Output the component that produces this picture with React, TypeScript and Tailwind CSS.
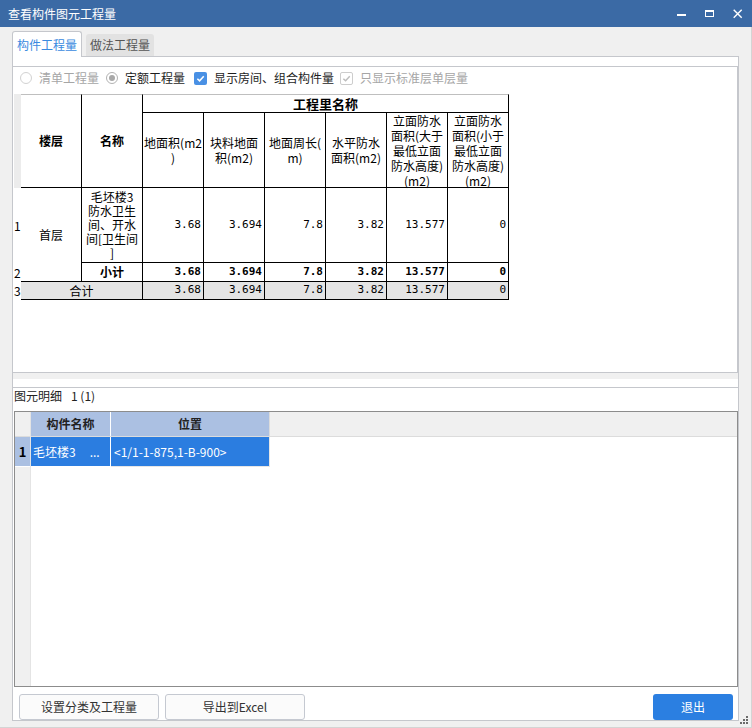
import React from "react";

const sans = "font-['Noto_Sans_CJK_SC','Noto_Sans',sans-serif]";
const mono = "font-['DejaVu_Sans_Mono','Liberation_Mono',monospace]";

function Radio({ checked }: { checked?: boolean }) {
  return (
    <span
      className={`flex h-[12px] w-[12px] items-center justify-center rounded-full border bg-white ${
        checked ? "border-[#b2b2b2]" : "border-[#d2d2d2]"
      }`}
    >
      {checked && <span className="h-[6px] w-[6px] rounded-full bg-[#a8a8a8]" />}
    </span>
  );
}

function Check({ disabled }: { disabled?: boolean }) {
  return disabled ? (
    <span className="flex h-[13px] w-[13px] items-center justify-center rounded-[2px] border border-[#cdcdcd] bg-white">
      <svg viewBox="0 0 10 10" className="h-[9px] w-[9px]">
        <path d="M1.5 5.2 4 7.6 8.6 2.6" fill="none" stroke="#bcbcbc" strokeWidth="1.6" />
      </svg>
    </span>
  ) : (
    <span className="flex h-[13px] w-[13px] items-center justify-center rounded-[2px] bg-[#4990e4]">
      <svg viewBox="0 0 10 10" className="h-[9px] w-[9px]">
        <path d="M1.5 5.2 4 7.6 8.6 2.6" fill="none" stroke="#ffffff" strokeWidth="1.7" />
      </svg>
    </span>
  );
}

const cell = "border-r border-b border-black";
const head = "border-t border-r border-b border-t-[#bfbfbf] border-r-black border-b-black";
const num = `flex items-center justify-end pr-[2px] ${mono} text-[11px]`;

const numCols = ["col-start-4", "col-start-5", "col-start-6", "col-start-7", "col-start-8", "col-start-9"];
const values = ["3.68", "3.694", "7.8", "3.82", "13.577", "0"];

function QuantityGrid() {
  return (
    <div className="ml-px grid grid-cols-[7px_repeat(8,61px)] grid-rows-[19px_75px_75px_19px_18px] text-[12px] text-black">
      <div className="col-start-1 row-start-1 row-span-2 bg-[#ececec]" />
      <div className={`col-start-2 row-start-1 row-span-2 flex items-center justify-center font-bold ${head}`}>楼层</div>
      <div className={`col-start-3 row-start-1 row-span-2 flex items-center justify-center font-bold ${head}`}>名称</div>
      <div className={`col-start-4 col-span-6 row-start-1 flex items-center justify-center text-[13px] font-bold ${head}`}>
        工程里名称
      </div>

      <div className={`col-start-4 row-start-2 flex items-center justify-center text-center leading-[15px] ${cell}`}>
        地面积(m2
        <br />)
      </div>
      <div className={`col-start-5 row-start-2 flex items-center justify-center text-center leading-[15px] ${cell}`}>
        块料地面
        <br />
        积(m2)
      </div>
      <div className={`col-start-6 row-start-2 flex items-center justify-center text-center leading-[15px] ${cell}`}>
        地面周长(
        <br />
        m)
      </div>
      <div className={`col-start-7 row-start-2 flex items-center justify-center text-center leading-[15px] ${cell}`}>
        水平防水
        <br />
        面积(m2)
      </div>
      <div className={`col-start-8 row-start-2 flex items-center justify-center whitespace-nowrap text-center leading-[15px] ${cell}`}>
        立面防水
        <br />
        面积(大于
        <br />
        最低立面
        <br />
        防水高度)
        <br />
        (m2)
      </div>
      <div className={`col-start-9 row-start-2 flex items-center justify-center whitespace-nowrap text-center leading-[15px] ${cell}`}>
        立面防水
        <br />
        面积(小于
        <br />
        最低立面
        <br />
        防水高度)
        <br />
        (m2)
      </div>

      <div className="col-start-1 row-start-3 flex items-center text-[12px] leading-none">1</div>
      <div className={`col-start-2 row-start-3 row-span-2 flex items-center justify-center ${cell}`}>首层</div>
      <div className={`col-start-3 row-start-3 flex items-center justify-center whitespace-nowrap text-center leading-[14px] ${cell}`}>
        毛坯楼3
        <br />
        防水卫生
        <br />
        间、开水
        <br />
        间[卫生间
        <br />]
      </div>
      {values.map((v, i) => (
        <div key={`a${i}`} className={`row-start-3 ${numCols[i]} ${num} ${cell}`}>
          {v}
        </div>
      ))}

      <div className="col-start-1 row-start-4 flex items-center text-[12px] leading-none">2</div>
      <div className={`col-start-3 row-start-4 flex items-center justify-center font-bold ${cell}`}>小计</div>
      {values.map((v, i) => (
        <div key={`b${i}`} className={`row-start-4 ${numCols[i]} ${num} font-bold ${cell}`}>
          {v}
        </div>
      ))}

      <div className="col-start-1 row-start-5 flex items-center text-[12px] leading-none">3</div>
      <div className={`col-start-2 col-span-2 row-start-5 flex items-center justify-center bg-[#e4e4e4] ${cell}`}>合计</div>
      {values.map((v, i) => (
        <div key={`c${i}`} className={`row-start-5 ${numCols[i]} ${num} bg-[#e4e4e4] ${cell}`}>
          {v}
        </div>
      ))}
    </div>
  );
}

function DetailGrid() {
  return (
    <div className="ml-px flex h-[276px] w-[724px] border border-[#8c8c8c] text-[12px]">
      <div className="flex w-[16px] flex-col border-r border-[#e4e4e4] bg-[#f0f0f0]">
        <div className="h-[25px] border-b border-[#dcdcdc]" />
        <div className="flex h-[30px] items-center justify-center border-b border-white bg-[#abc0e2] text-[13px] font-bold text-black">
          1
        </div>
      </div>
      <div className="flex flex-1 flex-col">
        <div className="flex h-[25px] border-b border-[#dcdcdc] bg-[#f0f0f0]">
          <div className="flex w-[80px] items-center justify-center border-r border-white bg-[#abc0e2] font-bold text-[#222]">
            构件名称
          </div>
          <div className="flex w-[159px] items-center justify-center border-r border-[#dcdcdc] bg-[#abc0e2] font-bold text-[#222]">
            位置
          </div>
        </div>
        <div className="flex h-[30px]">
          <div className="flex w-[80px] items-center border-r border-b border-white bg-[#2b7de0] pl-[2px] text-white">
            毛坯楼3<span className="ml-[14px]">...</span>
          </div>
          <div className="flex w-[159px] items-center border-r border-b border-[#e6e6e6] bg-[#2b7de0] pl-[3px] text-white">
            &lt;1/1-1-875,1-B-900&gt;
          </div>
        </div>
      </div>
    </div>
  );
}

export default function App() {
  return (
    <div className={`relative flex h-[728px] w-[752px] flex-col overflow-hidden bg-[#f0f0f0] ${sans} text-[12px]`}>
      <div className="flex h-[27px] shrink-0 items-center bg-[#3b6aa5] pl-[8px] text-white">
        <span>查看构件图元工程量</span>
        <div className="ml-auto flex h-[27px] items-center pr-[9px]">
          <svg viewBox="0 0 10 27" className="h-[27px] w-[10px]">
            <rect x="0" y="14" width="9" height="2" fill="#fff" />
          </svg>
          <svg viewBox="0 0 10 27" className="ml-[18px] h-[27px] w-[10px]">
            <rect x="0.5" y="10.5" width="8" height="6" fill="none" stroke="#fff" strokeWidth="1" />
            <rect x="0" y="10" width="9" height="2" fill="#fff" />
          </svg>
          <svg viewBox="0 0 10 27" className="ml-[18px] h-[27px] w-[10px]">
            <path d="M0.7 9.7 8.7 17.7M8.7 9.7 0.7 17.7" stroke="#fff" strokeWidth="1.4" />
          </svg>
        </div>
      </div>

      <div className="flex flex-1 flex-col border-r border-b border-[#d4d4d4]">
        <div className="flex items-end pl-[12px] pt-[4px]">
          <div className="relative z-10 -mb-px flex h-[26px] w-[70px] items-center justify-center rounded-t-[3px] border border-b-0 border-[#c5c7cc] bg-white text-[#3a8ae0]">
            构件工程量
          </div>
          <div className="ml-[4px] flex h-[22px] w-[68px] items-center justify-center rounded-t-[3px] bg-[#e2e2e2] text-[#555]">
            做法工程量
          </div>
        </div>

        <div className="ml-[12px] flex h-[665px] w-[727px] flex-col border border-[#c5c7cc] bg-white">
          <div className="h-[9px]" />
          <div className="flex h-[307px] flex-col border-t border-r border-b border-[#c5c7cc]">
            <div className="flex h-[27px] items-center pb-[5px] pl-[7px]">
              <Radio />
              <span className="ml-[7px] text-[#a6a6a6]">清单工程量</span>
              <span className="ml-[7px]">
                <Radio checked />
              </span>
              <span className="ml-[7px] text-[#1e1e1e]">定额工程量</span>
              <span className="ml-[9px]">
                <Check />
              </span>
              <span className="ml-[7px] text-[#1e1e1e]">显示房间、组合构件量</span>
              <span className="ml-[6px]">
                <Check disabled />
              </span>
              <span className="ml-[7px] text-[#a6a6a6]">只显示标准层单层量</span>
            </div>
            <QuantityGrid />
          </div>
          <div className="h-[6px] bg-[#f0f0f0]" />
          <div className="h-[8px]" />
          <div className="flex flex-1 flex-col border-t border-[#c5c7cc]">
            <div className="flex h-[23px] items-center pb-[7px] pl-px text-[#222]">
              图元明细<span className="ml-[9px]">1 (1)</span>
            </div>
            <DetailGrid />
            <div className="flex flex-1 items-start pl-[6px] pr-[5px] pt-[7px]">
              <button className="flex h-[26px] w-[140px] items-center justify-center rounded-[3px] border border-[#c5c9d1] bg-[#fbfbfb] text-[#333]">
                设置分类及工程量
              </button>
              <button className="ml-[6px] flex h-[26px] w-[140px] items-center justify-center rounded-[3px] border border-[#c5c9d1] bg-[#fbfbfb] text-[#333]">
                导出到Excel
              </button>
              <button className="ml-auto flex h-[26px] w-[80px] items-center justify-center rounded-[3px] bg-[#2b7fe1] text-white">
                退出
              </button>
            </div>
          </div>
        </div>
      </div>

      <svg viewBox="0 0 10 10" className="absolute bottom-[3px] right-[3px] h-[10px] w-[10px]">
        <rect x="7" y="1" width="2" height="2" fill="#6b6b6b" />
        <rect x="4" y="4" width="2" height="2" fill="#6b6b6b" />
        <rect x="7" y="4" width="2" height="2" fill="#6b6b6b" />
        <rect x="1" y="7" width="2" height="2" fill="#6b6b6b" />
        <rect x="4" y="7" width="2" height="2" fill="#6b6b6b" />
        <rect x="7" y="7" width="2" height="2" fill="#6b6b6b" />
      </svg>
    </div>
  );
}
